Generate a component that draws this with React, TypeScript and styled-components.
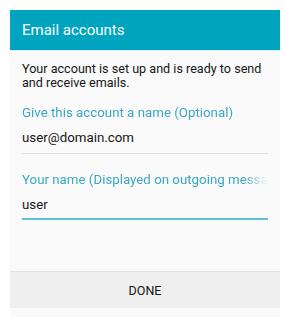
import React from "react";
import styled, { createGlobalStyle } from "styled-components";

const Global = createGlobalStyle`
  html, body { margin: 0; padding: 0; background: #ffffff; }
  body { font-family: Roboto, "Noto Sans", Arial, sans-serif; -webkit-font-smoothing: antialiased; }
`;

const Page = styled.div`
  padding: 10px;
`;

const Dialog = styled.div`
  width: 270px;
  height: 307px;
  background: #fafafa;
  display: flex;
  flex-direction: column;
  box-sizing: border-box;
  padding-bottom: 9px;
`;

const Header = styled.div`
  height: 40px;
  background: #00a4bf;
  color: #ffffff;
  font-size: 15px;
  display: flex;
  align-items: center;
  padding-left: 12px;
  border-bottom: 1px solid #d6f0f4;
`;

const Body = styled.div`
  flex: 1;
  padding: 11px 10px 0 12px;
`;

const Message = styled.p`
  margin: 0;
  font-size: 12.6px;
  line-height: 14.4px;
  color: #161616;
`;

const Field = styled.div<{ $gap: number }>`
  margin-top: ${(p) => p.$gap}px;
  width: 246px;
`;

const Label = styled.div`
  font-size: 13.3px;
  line-height: 16px;
  color: #3aa8c1;
  white-space: nowrap;
  overflow: hidden;
  -webkit-mask-image: linear-gradient(to right, #000 90%, transparent 100%);
  mask-image: linear-gradient(to right, #000 90%, transparent 100%);
`;

const Value = styled.div<{ $active?: boolean }>`
  font-size: 13.3px;
  line-height: 16px;
  color: #161616;
  padding: 9px 0 ${(p) => (p.$active ? 5 : 7)}px;
  border-bottom: ${(p) => (p.$active ? "2px solid #5bc3d6" : "1px solid #e0e0e0")};
`;

const ButtonBar = styled.div`
  height: 35px;
  background: #efefef;
  border-top: 1px solid #e2e2e2;
  display: flex;
  align-items: center;
  justify-content: center;
  font-size: 12.5px;
  color: #161616;
  padding-top: 1px;
`;

export default function App() {
  return (
    <Page>
      <Global />
      <Dialog>
        <Header>Email accounts</Header>
        <Body>
          <Message>Your account is set up and is ready to send and receive emails.</Message>
          <Field $gap={14}>
            <Label>Give this account a name (Optional)</Label>
            <Value>user@domain.com</Value>
          </Field>
          <Field $gap={18}>
            <Label>Your name (Displayed on outgoing messages)</Label>
            <Value $active>user</Value>
          </Field>
        </Body>
        <ButtonBar>DONE</ButtonBar>
      </Dialog>
    </Page>
  );
}
